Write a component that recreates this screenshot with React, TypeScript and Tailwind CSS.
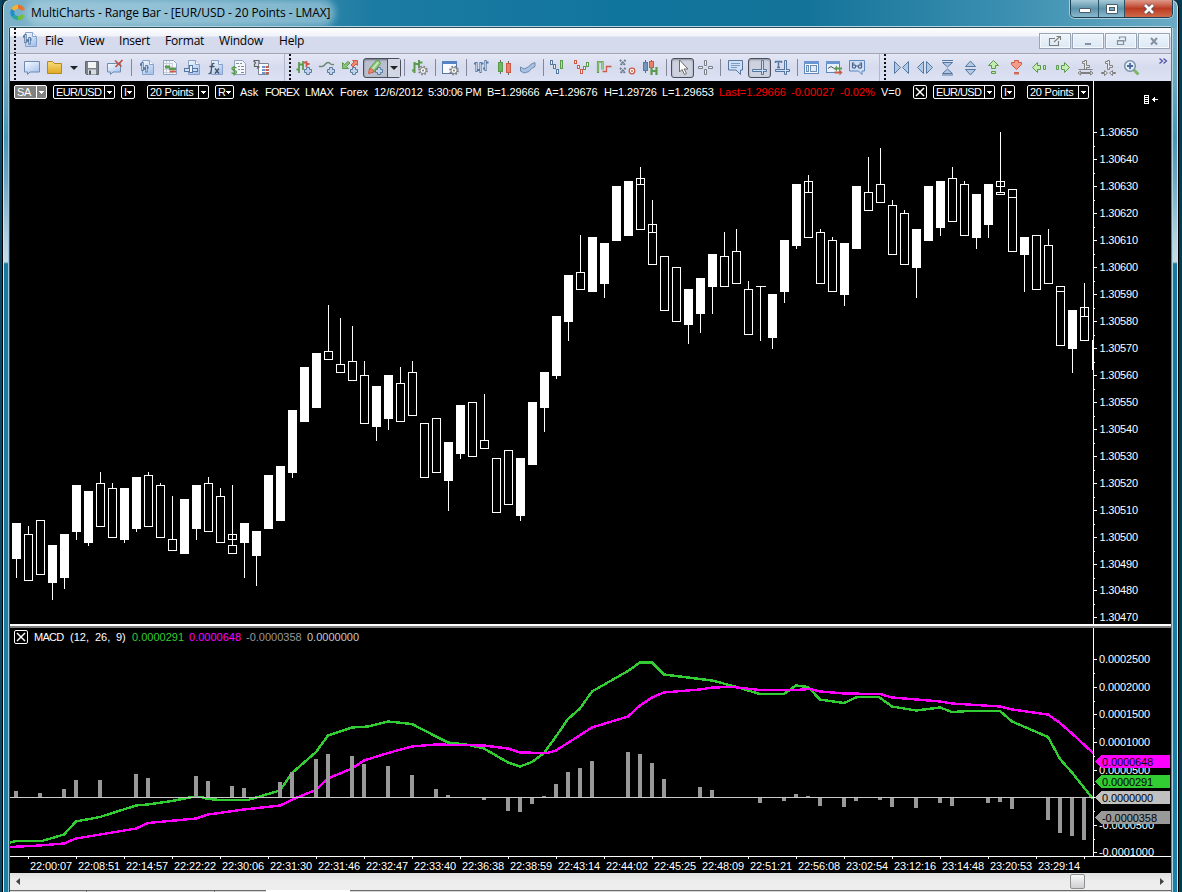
import React from "react";

type Candle = {
  f?: boolean;
  t: number;
  b: number;
  w?: [number, number];
  mid?: number;
  box2?: [number, number];
};

const F = (t: number, b: number, w = 0): Candle => ({ f: true, t, b, w: w ? [b, w] : undefined });
const H = (t: number, b: number, w = 0, mid = 0): Candle => ({ t, b, w: w ? [w, mid || t] : undefined, mid: mid || undefined });

const candles: Candle[] = [
  F(523, 559, 578), H(534, 581, 526), H(520, 575), F(545, 583, 600), F(534, 578, 589),
  F(485, 532, 540), F(491, 543, 546), H(483, 527, 472), H(488, 538, 483), F(488, 540, 543),
  F(477, 529, 532), H(475, 527, 472), H(485, 538, 483), H(539, 551, 496), F(499, 554),
  F(485, 529, 540), H(483, 532, 477), H(496, 543, 488),
  { t: 534, b: 540, w: [485, 545], box2: [545, 554] },
  F(523, 543, 578),
  F(531, 556, 586), F(475, 529), F(466, 521), F(410, 473, 478), F(367, 422),
  F(353, 408), H(351, 360, 305), H(364, 373, 318), H(361, 381, 326), H(375, 424, 361),
  F(386, 427, 441), F(375, 419, 430), H(383, 422, 367), H(372, 416, 361), H(423, 478),
  H(418, 473), F(442, 481, 511), F(405, 454, 459), H(402, 457), H(440, 449, 394),
  H(458, 513), H(450, 505), F(458, 516, 521), F(402, 465), F(372, 408, 432),
  F(316, 376, 379), F(275, 322, 341), H(272, 290, 235), F(237, 292), F(243, 284, 298),
  F(186, 241), F(181, 236), H(178, 230, 167, 184), H(224, 265, 200, 232), H(256, 311),
  H(267, 322), F(289, 325, 344), F(278, 314, 333), F(254, 287, 314), H(256, 287, 232),
  H(251, 284, 229), H(289, 335, 281), { t: 286, b: 287, w: [286, 341] }, F(294, 338, 349), F(240, 292, 303),
  F(184, 246, 249), H(181, 238, 175, 192), H(232, 284, 229), H(240, 292, 237), F(243, 295, 306),
  F(186, 249), H(192, 211, 157), H(184, 203, 148), H(205, 255, 200), H(213, 265, 210),
  F(229, 268, 298), F(186, 241), F(181, 228, 236), H(178, 222, 167), H(184, 236, 181),
  F(194, 238, 249), F(184, 225, 238),
  { t: 181, b: 187, w: [132, 192], box2: [192, 195] },
  { t: 189, b: 252, mid: 197 },
  F(237, 255, 292),
  H(235, 290), H(245, 284, 229), { t: 286, b: 346, mid: 291 }, F(310, 349, 373), H(307, 341, 283, 316),
];

const macd =
  "10,842.5 16,841 42,841 64,834.5 76,821.5 100,817 136,805.5 148,804.5 172,801 192,797 201,797 208,799 221,800 248,800 256,797.5 280,790.5 292,773 316,752 328,735.5 352,727.5 368,726.5 388,721.5 412,724 436,736.5 448,742.5 466,744.5 484,748.5 508,762.5 520,766.5 532,762 544,753 556,736.5 568,719 580,708.5 592,691.5 628,671 640,662.5 652,662.5 664,674.5 700,679 712,680.5 733,686 760,694 784,694 796,685.5 808,687 820,699.5 844,703 857,697 879,697 892,706.5 916,710.5 940,707.5 952,712 970,711 1000,711 1012,721.5 1048,737 1060,759 1072,772.5 1093,799";
const signal =
  "10,847 40,845.5 64,843.5 76,838.5 136,828.5 148,823 196,818.5 208,814.5 244,809.5 280,805.5 296,798 316,790 328,778.5 352,768.5 364,760.5 388,753 412,746.5 436,744.5 484,745.5 508,748.5 520,752.5 547,753 556,750.5 592,727.5 628,716.5 640,705.5 652,697.5 664,692.5 700,689.5 712,687.5 733,687 760,690 796,690 810,689 820,691.5 844,693.5 880,694 892,697.5 940,701.5 952,703.5 1000,706.5 1012,709.5 1048,714.5 1060,723 1072,733.5 1093,753";

const hist: [number, number][] = [
  [0, 791], [2, 793], [4, 789], [5, 780], [7, 780], [10, 774], [11, 778], [15, 776], [16, 781], [18, 786],
  [19, 788], [22, 782], [23, 772], [25, 759], [26, 754], [28, 756], [29, 764], [31, 766], [33, 775], [35, 789],
  [36, 795], [39, 800], [41, 811], [42, 812], [43, 804], [44, 796], [45, 784], [46, 772], [47, 768], [48, 761],
  [51, 752], [52, 754], [53, 763], [54, 779], [57, 787], [58, 790], [62, 803], [64, 801], [65, 794], [66, 796],
  [67, 806], [69, 807], [70, 801], [72, 800], [73, 807], [75, 808], [77, 803], [78, 806], [81, 803], [82, 802],
  [83, 809], [86, 820], [87, 833], [88, 836], [89, 840],
];

const times = [
  "22:00:07", "22:08:51", "22:14:57", "22:22:22", "22:30:06", "22:31:30", "22:31:46", "22:32:47",
  "22:33:40", "22:36:38", "22:38:59", "22:43:14", "22:44:02", "22:45:25", "22:48:09", "22:51:21",
  "22:56:08", "23:02:54", "23:12:16", "23:14:48", "23:20:53", "23:29:14",
];

const macdLevels: [number, string][] = [
  [659, "0.0002500"], [687, "0.0002000"], [714, "0.0001500"], [742, "0.0001000"],
  [770, "0.0000500"], [797, ""], [825, "-0.0000500"], [852, "-0.0001000"],
];

const tags: [number, string, string][] = [
  [755, "#ff00ff", "0.0000648"],
  [775, "#32cd32", "0.0000291"],
  [791, "#c0c0c0", "0.0000000"],
  [811, "#999999", "-0.0000358"],
];

function PriceChart() {
  return (
    <svg className="block shrink-0 bg-black" width="1161" height="519" viewBox="10 105 1161 519" shapeRendering="crispEdges">
      {candles.map((c, i) => {
        const x = 12 + 12 * i;
        return (
          <g key={i}>
            {c.f && <rect x={x} y={c.t} width="9" height={c.b - c.t} fill="#fff" />}
            {!c.f && c.b - c.t > 1 && (
              <rect x={x + 0.5} y={c.t + 0.5} width="8" height={c.b - c.t - 1} fill="none" stroke="#fff" />
            )}
            {!c.f && c.b - c.t === 1 && <rect x={x} y={c.t} width="10" height="1" fill="#fff" />}
            {c.box2 && (
              <rect x={x + 0.5} y={c.box2[0] + 0.5} width="8" height={c.box2[1] - c.box2[0] - 1} fill="none" stroke="#fff" />
            )}
            {c.mid && <rect x={x} y={c.mid} width="9" height="1" fill="#fff" />}
            {c.w && <rect x={x + 4} y={c.w[0]} width="1" height={c.w[1] - c.w[0]} fill="#fff" />}
          </g>
        );
      })}
      <rect x="1092" y="340" width="1" height="30" fill="#fff" />
      <rect x="1093" y="105" width="1" height="519" fill="#fff" />
      {Array.from({ length: 19 }, (_, i) => {
        const y = 132 + i * 27 - (i > 16 ? 1 : 0);
        return (
          <g key={i}>
            <rect x="1094" y={y} width="3" height="1" fill="#fff" />
            {i < 18 && <rect x="1094" y={y + 14} width="1" height="1" fill="#fff" />}
            <text x="1099.5" y={y + 4} fill="#fff" className="font-['Liberation_Sans',Arial,sans-serif] text-[11px]" textLength="38.5">
              {(1.3065 - i * 0.0001).toFixed(5)}
            </text>
          </g>
        );
      })}
    </svg>
  );
}

function MacdChart() {
  return (
    <svg className="block shrink-0 bg-black" width="1161" height="225" viewBox="10 648 1161 225" shapeRendering="crispEdges">
      <polyline points={macd} fill="none" stroke="#32cd32" strokeWidth="2.4" strokeLinejoin="round" />
      <polyline points={signal} fill="none" stroke="#ff00ff" strokeWidth="2.4" strokeLinejoin="round" />
      {hist.map(([i, y]) => (
        <rect key={i} x={14 + 12 * i} y={Math.min(y, 797)} width="4" height={Math.abs(y - 797)} fill="#999" />
      ))}
      <rect x="10" y="797" width="1083" height="1" fill="#c8c8c8" />
      <rect x="1093" y="648" width="1" height="209" fill="#fff" />
      <rect x="10" y="856" width="1161" height="1" fill="#fff" />
      {macdLevels.map(([y, label], i) => (
        <g key={y}>
          <rect x="1094" y={y} width="3" height="1" fill="#fff" />
          {i < 7 && <rect x="1094" y={y + 14} width="1" height="1" fill="#fff" />}
          <text x="1099" y={y + 4} fill="#fff" className="font-['Liberation_Sans',Arial,sans-serif] text-[11px]" textLength={label[0] === "-" ? 55 : 51}>
            {label}
          </text>
        </g>
      ))}
      <rect x="1094" y="857" width="77" height="3" fill="#000" />
      {tags.map(([y, color, label]) => (
        <g key={y}>
          <path d={`M1095 ${y + 6.5} L1101 ${y} H1170 V${y + 13} H1101 Z`} fill={color} />
          <text x="1102" y={y + 11} fill="#000" className="font-['Liberation_Sans',Arial,sans-serif] text-[11px]" textLength={label[0] === "-" ? 55 : 51}>
            {label}
          </text>
        </g>
      ))}
      {Array.from({ length: 23 }, (_, i) => (
        <rect key={i} x={28 + 48 * i} y="857" width="1" height="2" fill="#fff" />
      ))}
      {times.map((t, i) => (
        <text key={t} x={30 + 48 * i} y="870" fill="#fff" className="font-['Liberation_Sans',Arial,sans-serif] text-[11px]" textLength="42">
          {t}
        </text>
      ))}
    </svg>
  );
}

/* ---------- toolbar drawings, all on a 19x19 grid ---------- */

const BLUE = "#56779f";
const PALE = "#cfe0f6";
const GREEN = "#5b9a4c";
const RED = "#cc5a45";

const Page = () => (
  <g>
    <path d="M5.5 2.5h7l4 4v10h-11z" fill="url(#page)" stroke="#86a2cc" />
    <path d="M12.5 2.5v4h4" fill="#fff" stroke="#86a2cc" />
  </g>
);

const Plus = () => (
  <path d="M11.500 9.500h3v2h2v3h-2v2h-3v-2h-2v-3h2z" fill="#c0d3ec" stroke="#5d7a9c" />
);

const Gear = () => (
  <g>
    <circle cx="13" cy="12.500" r="4" fill="none" stroke="#808080" strokeWidth="1.800" strokeDasharray="1.600 1.540" />
    <circle cx="13" cy="12.500" r="3" fill="#f8f8f8" stroke="#858585" />
    <circle cx="13" cy="12.500" r="1" fill="#777" />
  </g>
);

const icons: Record<string, React.ReactNode> = {
  newChart: <path d="M1.500 3.500h15v10.500h-9.500l-2.500 2.500v-2.500h-3z" fill="url(#page)" stroke="#6c8cb2" />,
  folder: <path d="M1.500 15.500v-12h5l2 2h7v10z" fill="url(#gold)" stroke="#b28a1e" />,
  save: (
    <g>
      <path d="M2.500 3.500h13v13h-12l-1-1z" fill="#7b828a" stroke="#60676f" />
      <rect x="5" y="4" width="8" height="6" fill="#f2f4f6" />
      <rect x="5" y="11.500" width="8" height="5" fill="#d8dbe0" />
      <rect x="6" y="12.500" width="2" height="4" fill="#4f565e" />
    </g>
  ),
  closeChart: (
    <g>
      <path d="M1.500 5.500h13v8.500h-7.500l-2.500 2.500v-2.500h-3z" fill="url(#page)" stroke="#6c8cb2" />
      <path d="M9 2.500l6.500 6M16.500 2L9.500 9" stroke="#c0503c" strokeWidth="1.700" fill="none" />
    </g>
  ),
  docBar: (
    <g>
      <Page />
      <path d="M5.500 4v9M9.500 7v7.500M3 6.500h2.500M5.500 10.500h4M9.500 9.500h2" stroke={BLUE} strokeWidth="2.400" fill="none" />
      <path d="M5.500 5v7M9.500 8v5.500" stroke="#d5e4f8" strokeWidth=".8" fill="none" />
    </g>
  ),
  docGrid: (
    <g>
      <path d="M3.500 2.500h10l3 3v11h-13z" fill="#f6f8fc" stroke="#8ea2c2" />
      <path d="M4 5.500h9M4 8.500h9M4 11.500h9M4 14.500h9M6.500 3v13M9.500 3v13M12.500 5v11" stroke="#c3cede" fill="none" />
      <rect x="5" y="7.500" width="5" height="3" fill={GREEN} />
      <rect x="9" y="9.500" width="7" height="2.500" fill={GREEN} />
      <rect x="10" y="12.500" width="6" height="2" fill={RED} />
    </g>
  ),
  docPad: (
    <g>
      <Page />
      <rect x="1.500" y="10.500" width="13" height="3" fill={PALE} stroke={BLUE} />
      <rect x="6.500" y="7.500" width="3" height="7" fill="#e9f1fc" stroke={BLUE} />
    </g>
  ),
  docFx: (
    <g>
      <Page />
      <path d="M8.500 5.500c-2.500-1-2.500 2-3 5s-.5 6-3 5M3.500 8.500h5M9 10.500l4 5M13 10.500l-4 5" stroke="#46535f" strokeWidth="1.300" fill="none" />
    </g>
  ),
  docDollar: (
    <g>
      <path d="M5.500 2.500h8l3 3v11h-11z" fill="#f4f7fc" stroke="#8ea2c2" />
      <path d="M7 5.500h3M11 5.500h2M9 8.500h2M12 8.500h3M9 11.500h2M12 11.500h3M12 14.500h3" stroke="#848b96" />
      <path d="M7.500 10c-2-1.500-4.500-1-4.500.8s4.500 1.400 4.500 3.200-3 2.300-5 .8M5.200 8v9.500" stroke={GREEN} strokeWidth="1.400" fill="none" />
    </g>
  ),
  docTable: (
    <g>
      <path d="M6.500 5.500h10v11h-10z" fill="#f4f7fc" stroke="#7c8794" />
      <rect x="10" y="8" width="3" height="8" fill="#6f93c4" />
      <rect x="13.500" y="8" width="3" height="8" fill={RED} />
      <path d="M7 10.500h10M7 13.500h10" stroke="#fff" />
      <path d="M2 2.500h5v3M4 5.500l-2.500-3M7 8.500H2.500v-3M5 10.500l2.500-2" stroke="#606060" strokeWidth="1.200" fill="none" />
    </g>
  ),
  barsPlus: (
    <g>
      <path d="M4 4v11M8 3v9M1.500 11.500H4M4 6.500h4" stroke={GREEN} strokeWidth="1.800" fill="none" />
      <path d="M11.500 3v6M9 4.500h2.500M11.500 6h3" stroke={RED} strokeWidth="1.800" fill="none" />
      <Plus />
    </g>
  ),
  curvePlus: (
    <g>
      <path d="M1 8.500h3c3 0 3-4 6-4s1.500 3 6 2" stroke="#6b8870" strokeWidth="1.400" fill="none" />
      <Plus />
    </g>
  ),
  arrowsPlus: (
    <g>
      <path d="M1.500 4.500v6h6l-2-2 3.500-3.500-2-1.500-3.500 3z" fill="#8cc377" stroke={GREEN} />
      <path d="M11.500 2.500h5v5l-1.500-1.500-3 3-2-2 3-3z" fill="#ee8a72" stroke={RED} />
      <Plus />
    </g>
  ),
  pencilPlus: (
    <g>
      <path d="M3.500 10.500L10.500 2.500q3.500-.5 4 3L8 14z" fill="#92c87e" stroke={GREEN} />
      <path d="M6 11.500l6.500-7.500" stroke="#cdebc0" strokeWidth="1.500" />
      <path d="M3.500 10.500q3.500 0 4.500 3.500l-5.500 1.500z" fill="#ee8a72" stroke={RED} />
      <Plus />
    </g>
  ),
  barsGear: (
    <g>
      <path d="M4.500 4v11M2 12.500h2.500M4.500 6H9M9 2v8M9 4.500h3.500" stroke={GREEN} strokeWidth="2" fill="none" />
      <Gear />
    </g>
  ),
  windowGear: (
    <g>
      <rect x="1.500" y="3.500" width="14" height="12" fill="#f7f9fd" stroke={BLUE} />
      <rect x="1" y="3" width="15" height="3" fill="#5483c4" />
      <Gear />
    </g>
  ),
  ohlc: (
    <g>
      <path d="M4.500 4v10M2 5.500h2.500M4.500 12H8M8.500 4v11M8.500 5.500h3M13.500 2v11M11 10.500h2.500M13.500 4.500h3" stroke={BLUE} strokeWidth="2.200" fill="none" />
      <path d="M4.500 5v8M8.500 5v9M13.500 3v9" stroke="#d5e2f4" strokeWidth=".8" />
    </g>
  ),
  candles: (
    <g>
      <path d="M5.500 2v14M13.500 3v14" stroke="#666" />
      <rect x="3.500" y="4.500" width="4" height="9" fill="#6fb85e" stroke={GREEN} />
      <rect x="11.500" y="5.500" width="4" height="9" fill="#ea7f6a" stroke={RED} />
    </g>
  ),
  area: <path d="M2.500 9l3.500 2 4.500-2 2-2.500 4.500-2v4l-3.500 2-2.500 3-5 1.500-3.500-2z" fill="#a9c2e2" stroke="#6c8cb2" />,
  kagiUp: (
    <g fill="#eef3fb">
      <rect x="1.500" y="2.500" width="2" height="4" stroke={BLUE} />
      <rect x="4.500" y="6.500" width="2" height="4" stroke={BLUE} />
      <rect x="7.500" y="11.500" width="2" height="4" stroke={BLUE} />
      <rect x="11.500" y="2.500" width="2" height="8" fill="#b5dea6" stroke={GREEN} />
    </g>
  ),
  kagiDown: (
    <g fill="#eef3fb">
      <rect x="2.500" y="2.500" width="2" height="3" stroke={RED} />
      <rect x="5.500" y="7.500" width="2" height="3" stroke={RED} />
      <rect x="8.500" y="11.500" width="2" height="4" stroke={RED} />
      <rect x="11.500" y="8.500" width="2" height="3" stroke={GREEN} />
      <rect x="14.500" y="4.500" width="2" height="4" stroke={GREEN} />
    </g>
  ),
  stepLine: (
    <g fill="none">
      <path d="M3 15V4h4.500v7.500" stroke={GREEN} strokeWidth="2.200" />
      <path d="M3 14V4h4.500v7" stroke="#b5dea6" strokeWidth=".7" />
      <path d="M7.500 13.500h4V8.500h5" stroke={RED} strokeWidth="1.300" />
    </g>
  ),
  pointFig: (
    <g fill="none">
      <path d="M2 2l5.500 5.500M7.500 2L2 7.500M2 10l5.500 5.500M7.500 10L2 15.500" stroke="#64778b" strokeWidth="2" strokeDasharray="1.700 .9" />
      <circle cx="14" cy="13" r="2.800" fill="#fff" stroke={RED} strokeWidth="1.300" />
      <circle cx="14" cy="13" r=".9" fill={RED} />
    </g>
  ),
  candleH: (
    <g>
      <path d="M4.500 2v13M10.500 2v12" stroke="#666" />
      <rect x="2.500" y="4.500" width="4" height="8" fill="#7796bd" stroke={BLUE} />
      <rect x="8.500" y="3.500" width="4" height="6" fill="#ea7f6a" stroke={RED} />
      <path d="M10.500 9v8M15.500 9v8M10.500 13h5" stroke={GREEN} strokeWidth="2.200" />
    </g>
  ),
  pointer: <path d="M6.500 2v12l2.500-2.500 2.500 5 2-1-2.500-4.500h4z" fill="#fff" stroke="#6a6a6a" />,
  cross: (
    <g fill="#eef1f8" stroke="#7a7f88">
      <path d="M8.500 2.500h2v5h-2zM8.500 11.500h2v5h-2zM2.500 8.500h4v2h-4zM12.500 8.500h4v2h-4z" />
    </g>
  ),
  note: (
    <g>
      <path d="M2.500 2.500h14v9.500h-2v4.500l-4.500-4.500h-7.500z" fill={PALE} stroke={BLUE} />
      <path d="M5 5.500h9M5 7.500h9M5 9.500h6" stroke="#7d9cc4" />
    </g>
  ),
  priceLine: (
    <g fill={PALE} stroke={BLUE}>
      <path d="M2.500 11.500h14v2h-14z" />
      <path d="M11.500 2.500h2v14h-2z" />
      <path d="M3 12.500h13" stroke={PALE} />
    </g>
  ),
  textLine: (
    <g>
      <path d="M2 3.500h7M5.500 3v6M4 9.500h3M2.500 3v2M8.500 3v2" stroke={BLUE} strokeWidth="1.500" />
      <g fill={PALE} stroke={BLUE}>
        <path d="M2.500 11.500h14v2h-14z" />
        <path d="M11.500 2.500h2v14h-2z" />
        <path d="M3 12.500h13" stroke={PALE} />
      </g>
    </g>
  ),
  panel: (
    <g>
      <rect x="2.500" y="3.500" width="14" height="12" fill="#f7f9fd" stroke="#5f86bd" />
      <rect x="2" y="3" width="15" height="3" fill="#6c96d0" />
      <rect x="4.500" y="7.500" width="2" height="6" fill="#dfe9f8" stroke="#6c8cb2" />
      <rect x="8.500" y="7.500" width="6" height="6" fill="#dfe9f8" stroke="#6c8cb2" />
    </g>
  ),
  chartSwap: (
    <g>
      <rect x="1.500" y="3.500" width="13" height="11" fill="#e8f0fb" stroke="#5f86bd" />
      <rect x="1" y="3" width="14" height="3" fill="#6c96d0" />
      <path d="M3 10.500l3-2 4 2.500" stroke="#555" fill="none" />
      <path d="M9 10.500l3-3v2h5v2h-5v2z" fill={GREEN} />
      <path d="M17.500 14.500l-3-3v2h-5v2h5v2z" fill={RED} />
    </g>
  ),
  find: (
    <g>
      <path d="M1.500 2.500h15v10.500h-2.500v3.500l-3.500-3.500h-9z" fill={PALE} stroke="#5f86bd" />
      <g fill="none" stroke="#4d6485" strokeWidth="1.200">
        <circle cx="6" cy="8.500" r="1.700" />
        <circle cx="12" cy="8.500" r="1.700" />
        <path d="M4.500 7.500V5h2M13.500 7.500V5h-2M8 8h2" />
      </g>
    </g>
  ),
  compressH: <path d="M2.500 3.500v12l6-6zM16.500 3.500v12l-6-6z" fill="#b2c9e6" stroke={BLUE} />,
  expandH: <path d="M8.500 3.500v12l-6-6zM11.500 3.500v12l6-6z" fill="#b2c9e6" stroke={BLUE} />,
  compressV: <path d="M4.500 4.500h10l-5 4.500zM4.500 15.500h10l-5-4.500zM4 2.500h11M4 17h11" fill="#b2c9e6" stroke={BLUE} />,
  expandV: <path d="M4.500 8.500h10l-5-5.500zM4.500 11.500h10l-5 5.500z" fill="#b2c9e6" stroke={BLUE} />,
  up: <path d="M9.500 2.500l5 5h-3v3h-4v-3h-3zM7.500 13.500h4v2h-4z" fill="#c3ecae" stroke={GREEN} />,
  down: <path d="M9.500 11.500l-5-5v-2h3v-2h4v2h3v2zM7.500 14.500h4v1.500h-4z" fill="#f39c88" stroke={RED} />,
  left: <path d="M2.500 9.500l5-5v3h3v4h-3v3zM13.500 7.500h2v4h-2z" fill="#c3ecae" stroke={GREEN} />,
  right: <path d="M16.500 9.500l-5-5v3h-3v4h3v3zM3.500 7.500h2v4h-2z" fill="#c3ecae" stroke={GREEN} />,
  spaceOut: (
    <g fill="#e8e8ea" stroke="#808080">
      <path d="M6.500 3.500h2v-1h2v5h3v2h-3v2h-2v-6h-2z" />
      <path d="M2.500 11.500h14M2 15l2.500-2v1.500h10v-1.500l2.500 2-2.500 2v-1.500h-10v1.500z" />
    </g>
  ),
  spaceIn: (
    <g fill="#e8e8ea" stroke="#808080">
      <path d="M6.500 3.500h2v-1h2v5h3v2h-3v2h-2v-6h-2z" />
      <path d="M2.500 14.500h3v-2l3 2.500-3 2.500v-2h-3zM16.500 14.500h-3v-2l-3 2.500 3 2.500v-2h3z" />
    </g>
  ),
  zoomIn: (
    <g>
      <path d="M11.500 11.500l5 5" stroke="#7cb766" strokeWidth="3" />
      <circle cx="8" cy="8" r="5.300" fill="#e2edfa" stroke="#7c8fa9" strokeWidth="1.500" />
      <path d="M8 5v6M5 8h6" stroke="#4a6c9d" strokeWidth="1.800" />
    </g>
  ),
};

function Icon({ n }: { n: string }) {
  return (
    <div className="flex h-[27px] w-[23px] shrink-0 items-center justify-center">
      <svg className="block" width="19" height="19" viewBox="0 0 19 19">
        {icons[n]}
      </svg>
    </div>
  );
}

const Sep = ({ w = "w-[8px]" }: { w?: string }) => (
  <div className={`flex h-full shrink-0 justify-center ${w}`}>
    <div className="my-[5px] w-px bg-[#82879a]" />
  </div>
);

const Grip = ({ w }: { w: string }) => (
  <div className={`h-full shrink-0 pl-[4px] ${w}`}>
    <div className="h-full w-[2px] bg-[repeating-linear-gradient(to_bottom,#111_0_2px,transparent_2px_4px)]" />
  </div>
);

const Tri = ({ fill = "#222", w = 8 }: { fill?: string; w?: number }) => (
  <svg className="block shrink-0" width={w} height={w / 2} viewBox="0 0 8 4">
    <path d="M0 0h8L4 4z" fill={fill} />
  </svg>
);

const SmallTri = () => (
  <svg className="block shrink-0" width="5" height="3" viewBox="0 0 5 3" shapeRendering="crispEdges">
    <path d="M0 0h5v1H0zM1 1h3v1H1zM2 2h1v1H2z" fill="#fff" />
  </svg>
);

function Toolbar() {
  return (
    <div className="flex h-[27px] shrink-0 items-center overflow-hidden bg-gradient-to-b from-[#e4e7f5] via-[#d6dbee] to-[#dde3f5]">
      <Grip w="w-[11px]" />
      <Icon n="newChart" />
      <Icon n="folder" />
      <div className="flex w-[14px] shrink-0 justify-center"><Tri /></div>
      <Icon n="save" />
      <Icon n="closeChart" />
      <Sep />
      {["docBar", "docGrid", "docPad", "docFx", "docDollar", "docTable"].map((n) => <Icon key={n} n={n} />)}
      <div className="h-full w-[12px] shrink-0 border-r border-[#b4b8c8]" />
      <Grip w="w-[8px]" />
      {["barsPlus", "curvePlus", "arrowsPlus"].map((n) => <Icon key={n} n={n} />)}
      <div className="ml-px flex h-[20px] w-[38px] shrink-0 items-center rounded-[3px] border border-[#4b4f5c] bg-[#b9bfce] shadow-[inset_0_1px_2px_#6b7080]">
        <Icon n="pencilPlus" />
        <div className="flex h-full flex-1 items-center justify-center border-l border-[#4b4f5c] bg-[#d3d7e3]"><Tri /></div>
      </div>
      <Sep w="w-[7px]" />
      <Icon n="barsGear" />
      <Sep />
      <Icon n="windowGear" />
      <Sep />
      {["ohlc", "candles", "area"].map((n) => <Icon key={n} n={n} />)}
      <Sep />
      {["kagiUp", "kagiDown", "stepLine", "pointFig", "candleH"].map((n) => <Icon key={n} n={n} />)}
      <Sep />
      <div className="ml-px flex h-[20px] w-[23px] shrink-0 items-center justify-center rounded-[3px] border border-[#4b4f5c] bg-[#ced2de] shadow-[inset_0_1px_2px_#8b90a0]">
        <Icon n="pointer" />
      </div>
      <Icon n="cross" />
      <Sep w="w-[7px]" />
      <Icon n="note" />
      <div className="ml-px flex h-[20px] w-[23px] shrink-0 items-center justify-center rounded-[3px] border border-[#4b4f5c] bg-[#ced2de] shadow-[inset_0_1px_2px_#8b90a0]">
        <Icon n="priceLine" />
      </div>
      <Icon n="textLine" />
      <Sep w="w-[6px]" />
      {["panel", "chartSwap", "find"].map((n) => <Icon key={n} n={n} />)}
      <div className="h-full w-[11px] shrink-0 border-r border-[#b4b8c8]" />
      <Grip w="w-[10px]" />
      {["compressH", "expandH", "compressV", "expandV", "up", "down", "left", "right", "spaceOut", "spaceIn", "zoomIn"].map((n) => (
        <Icon key={n} n={n} />
      ))}
      <svg className="mb-[13px] ml-[16px] block shrink-0" width="9" height="6" viewBox="0 0 9 6">
        <path d="M.5 .5L3.500 3 .5 5.500M4.500 .5L7.500 3 4.500 5.500" fill="none" stroke="#4c4fa8" strokeWidth="1.200" />
      </svg>
    </div>
  );
}

const Combo = ({ text, w, gray = false, tight = false }: { text: string; w: string; gray?: boolean; tight?: boolean }) => (
  <div className={`flex h-[14px] shrink-0 items-center rounded-[2px] border border-white leading-none ${w} ${gray ? "bg-[#808080]" : "bg-black"}`}>
    <span className={`flex-1 whitespace-nowrap pl-[2px] ${tight ? "tracking-[-0.6px]" : "tracking-[-0.25px]"}`}>{text}</span>
    <span className="flex h-full w-[10px] shrink-0 items-center justify-center border-l border-white"><SmallTri /></span>
  </div>
);

const MiniCombo = ({ text, w }: { text: string; w: string }) => (
  <div className={`flex h-[14px] shrink-0 items-center justify-between rounded-[2px] border border-white px-[2px] leading-none ${w}`}>
    <span>{text}</span>
    <SmallTri />
  </div>
);

const CloseBox = () => (
  <div className="flex h-[14px] w-[14px] shrink-0 items-center justify-center rounded-[2px] border border-white">
    <svg className="block" width="10" height="10" viewBox="0 0 10 10">
      <path d="M1 1l8 8M9 1L1 9" stroke="#fff" strokeWidth="1.500" />
    </svg>
  </div>
);

function StatusLine() {
  return (
    <div className="flex h-[24px] shrink-0 bg-black text-[11px] text-white">
      <div className="flex h-full w-[1083px] shrink-0 items-start whitespace-nowrap pl-[4px] pt-[4px] leading-[14px]">
        <Combo text="SA" w="w-[33px]" gray />
        <div className="w-[6px] shrink-0" />
        <Combo text="EUR/USD" w="w-[62px]" tight />
        <div className="w-[6px] shrink-0" />
        <MiniCombo text="I" w="w-[14px]" />
        <div className="w-[12px] shrink-0" />
        <Combo text="20 Points" w="w-[62px]" />
        <div className="w-[6px] shrink-0" />
        <MiniCombo text="R" w="w-[19px]" />
        <div className="w-[6px] shrink-0" />
        <span className="w-[25px] shrink-0">Ask</span>
        <span className="w-[40px] shrink-0 tracking-[-0.75px]">FOREX</span>
        <span className="w-[35px] shrink-0 tracking-[-0.4px]">LMAX</span>
        <span className="w-[34px] shrink-0">Forex</span>
        <span className="w-[54px] shrink-0">12/6/2012</span>
        <span className="w-[59px] shrink-0 tracking-[-0.3px]">5:30:06 PM</span>
        <span className="w-[58px] shrink-0 tracking-[-0.1px]">B=1.29666</span>
        <span className="w-[59px] shrink-0 tracking-[-0.1px]">A=1.29676</span>
        <span className="w-[58px] shrink-0 tracking-[-0.15px]">H=1.29726</span>
        <span className="w-[57px] shrink-0 tracking-[-0.05px]">L=1.29653</span>
        <span className="w-[72px] shrink-0 text-[#ff0000]">Last=1.29666</span>
        <span className="w-[49px] shrink-0 text-[#ff0000]">-0.00027</span>
        <span className="w-[41px] shrink-0 text-[#ff0000]">-0.02%</span>
        <span className="w-[32px] shrink-0">V=0</span>
        <CloseBox />
        <div className="w-[6px] shrink-0" />
        <Combo text="EUR/USD" w="w-[62px]" tight />
        <div className="w-[6px] shrink-0" />
        <MiniCombo text="I" w="w-[14px]" />
        <div className="w-[12px] shrink-0" />
        <Combo text="20 Points" w="w-[62px]" />
      </div>
      <div className="h-full flex-1 border-l border-white pl-[50px] pt-[14px]">
        <svg className="block" width="16" height="9" viewBox="0 0 16 9" shapeRendering="crispEdges">
          <path d="M.5 .5h4v8h-4zM0 2.500h5M0 4.500h5M0 6.500h5" fill="none" stroke="#fff" />
          <path d="M8 4h6v1H8zM9 3h2v3H9zM10 2h1v5h-1z" fill="#fff" />
        </svg>
      </div>
    </div>
  );
}

const MdiButton = ({ children }: { children: React.ReactNode }) => (
  <div className="flex h-[16px] w-[32px] items-center justify-center border border-[#98a5b5] bg-gradient-to-b from-[#eef5fc] to-[#dbe8f5] shadow-[inset_0_0_0_1px_#f5f9fd]">
    <svg className="block" width="14" height="12" viewBox="0 0 14 12">{children}</svg>
  </div>
);

function MenuBar() {
  return (
    <div className="flex h-[26px] shrink-0 border-b border-[#a3a6b2] bg-[linear-gradient(to_bottom,#fff_0,#f0f2f9_8px,#d5daec_9px,#d5daec_100%)]">
      <Grip w="w-[10px]" />
      <svg className="mt-[2px] block shrink-0" width="19" height="19" viewBox="0 0 19 19">{icons.docBar}</svg>
      <div className="ml-[6px] flex shrink-0 font-['Open_Sans','Noto_Sans',sans-serif] text-[12px] leading-[25px] tracking-[-0.2px] text-black">
        <span className="w-[34px]">File</span>
        <span className="w-[40px]">View</span>
        <span className="w-[46px]">Insert</span>
        <span className="w-[54px]">Format</span>
        <span className="w-[60px]">Window</span>
        <span>Help</span>
      </div>
      <div className="ml-auto mr-px mt-[5px] flex gap-px">
        <MdiButton><path d="M7 3.500H1.500v7h9V6M6 7l6-5.500M8.500 1.500h4v3.500" fill="none" stroke="#7c8078" strokeWidth="1.100" /></MdiButton>
        <MdiButton><rect x="4" y="8" width="6" height="2" fill="#8591a1" /></MdiButton>
        <MdiButton>
          <path d="M5.500 4V2h6v4h-2M3.500 5.500h6v4h-6zM3.500 6h6" fill="none" stroke="#8591a1" strokeWidth="1.200" />
        </MdiButton>
        <MdiButton><path d="M4 3l6 6.500M10 3L4 9.500" stroke="#8591a1" strokeWidth="2" /></MdiButton>
      </div>
    </div>
  );
}

function TitleBar() {
  return (
    <div className="flex h-[28px] shrink-0 bg-[#053a52]">
      <div className="w-[2px] bg-[#0a4763]" />
      <div className="flex h-full flex-1 overflow-hidden rounded-t-[7px] border-l border-r border-black bg-[#cfe3ec] px-px">
        <div className="flex flex-1 justify-between rounded-t-[7px] bg-[linear-gradient(to_right,#7cb2c9_0,#5a9fbc_180px,#1c7ba2_370px,#10759d_620px,#147399_800px,#3a8fb0_1000px,#6aaac4_100%)]">
          <div className="flex items-start pl-[6px] pt-[4px]">
            <svg className="block shrink-0" width="16" height="17" viewBox="0 0 16 17">
              <g fill="none" strokeWidth="4">
                <path d="M8 2.800a5.700 5.700 0 0 1 5.300 3.400" stroke="#e8702c" />
                <path d="M3 6a5.700 5.700 0 0 1 5-3.200" stroke="#f5b335" />
                <path d="M3.500 12A5.700 5.700 0 0 1 3 6" stroke="#1d8fd0" />
                <path d="M8 14.200a5.700 5.700 0 0 1-4.500-2.200" stroke="#2aa6a0" />
                <path d="M13.300 11A5.700 5.700 0 0 1 8 14.200" stroke="#6fbf3b" />
              </g>
            </svg>
            <div className="ml-[5px] whitespace-nowrap rounded-full bg-[#b4d6e4]/60 font-['Open_Sans','Noto_Sans',sans-serif] text-[12px] leading-[18px] tracking-[-0.1px] text-black shadow-[0_0_7px_5px_rgba(180,214,228,0.6)]">
              MultiCharts - Range Bar - [EUR/USD - 20 Points - LMAX]
            </div>
          </div>
          <div className="mr-[4px] flex h-[18px] overflow-hidden rounded-b-[5px] border border-t-0 border-[#1d3f50] shadow-[0_0_0_1px_#a8cddc]">
            <div className="flex w-[28px] items-center justify-center border-r border-[#2b5265] bg-gradient-to-b from-[#a8cbd9] via-[#5d93ab] to-[#8ab9cd]">
              <div className="mt-[3px] h-[5px] w-[12px] rounded-[1px] border border-[#4a5a66] bg-white" />
            </div>
            <div className="flex w-[26px] items-center justify-center border-r border-[#2b5265] bg-gradient-to-b from-[#a8cbd9] via-[#5d93ab] to-[#8ab9cd]">
              <div className="flex h-[10px] w-[12px] items-center justify-center rounded-[1px] border border-[#4a5a66] bg-white">
                <div className="h-[4px] w-[6px] border border-[#4a5a66] bg-[#7fa9bd]" />
              </div>
            </div>
            <div className="flex w-[47px] items-center justify-center bg-gradient-to-b from-[#dd9a8a] via-[#bb3a22] to-[#cf6a4b]">
              <svg className="block" width="14" height="12" viewBox="0 0 14 12">
                <path d="M3 2l8 8M11 2l-8 8" stroke="#4b4b55" strokeWidth="4.500" />
                <path d="M3 2l8 8M11 2l-8 8" stroke="#fff" strokeWidth="2.800" />
              </svg>
            </div>
          </div>
        </div>
      </div>
      <div className="w-[3px] bg-[#053a52]" />
    </div>
  );
}

const Glass = () => (
  <div className="w-[4px] bg-[linear-gradient(to_bottom,#78afc7_0,#6aa8c2_50px,#4796b8_110px,#6ba7c4_150px,#b9d3e3_215px,#c6dbe7_234px,#5f95ac_235px,#1679a2_236px,#1a80a8_100%)]" />
);

export default function App() {
  return (
    <div className="flex h-[892px] w-[1182px] flex-col overflow-hidden bg-[#053a52] font-['Liberation_Sans',Arial,sans-serif]">
      <svg width="0" height="0" className="absolute">
        <defs>
          <linearGradient id="page" x1="0" y1="0" x2="0.600" y2="1">
            <stop offset="0" stopColor="#f8fbff" />
            <stop offset="1" stopColor="#a9c4ee" />
          </linearGradient>
          <linearGradient id="gold" x1="0" y1="0" x2="0" y2="1">
            <stop offset="0" stopColor="#f8dd7c" />
            <stop offset="1" stopColor="#dfa921" />
          </linearGradient>
        </defs>
      </svg>
      <TitleBar />
      <div className="flex h-[864px]">
        <div className="flex w-[10px] shrink-0">
          <div className="w-[2px] bg-[#0a4763]" />
          <div className="w-px bg-black" />
          <div className="w-px bg-[#d3e6ee]" />
          <Glass />
          <div className="w-px bg-[#9cc6d8]" />
          <div className="w-px bg-[#1f4a5c]" />
        </div>
        <div className="-mt-[2px] flex h-[866px] w-[1161px] shrink-0 flex-col border-t border-[#b5d5e2]">
          <div className="h-px shrink-0 bg-[#2b4d5b]" />
          <MenuBar />
          <Toolbar />
          <StatusLine />
          <PriceChart />
          <div className="h-[4px] shrink-0 border-b-2 border-t-2 border-b-[#808080] border-t-white" />
          <div className="flex h-[20px] shrink-0 bg-black text-[11px] text-white">
            <div className="flex w-[1083px] shrink-0 items-start whitespace-nowrap pl-[4px] pt-[2px] leading-[14px]">
              <CloseBox />
              <span className="ml-[6px] w-[36px] tracking-[-0.7px]">MACD</span>
              <span className="w-[25px]">(12,</span>
              <span className="w-[21px]">26,</span>
              <span className="w-[16px]">9)</span>
              <span className="w-[57px] text-[#32cd32]">0.0000291</span>
              <span className="w-[57px] text-[#ff00ff]">0.0000648</span>
              <span className="w-[61px] text-[#999]">-0.0000358</span>
              <span className="text-[#c8c8c8]">0.0000000</span>
            </div>
            <div className="flex-1 border-l border-white" />
          </div>
          <MacdChart />
          <div className="flex h-[17px] shrink-0 items-center bg-gradient-to-b from-[#e0e0e0] via-[#ededed] to-[#eeeeee] pl-[6px] pr-[7px]">
            <svg className="block" width="4" height="7" viewBox="0 0 4 7"><path d="M4 0v7L0 3.500z" fill="#444" /></svg>
            <div className="ml-auto mr-[75px] h-[15px] w-[15px] rounded-[2px] border border-[#8f8f8f] bg-gradient-to-b from-[#f8f8f8] to-[#cfcfd2]" />
            <svg className="block" width="4" height="7" viewBox="0 0 4 7"><path d="M0 0v7L4 3.500z" fill="#444" /></svg>
          </div>
          <div className="flex h-[2px] shrink-0 border-t border-[#6b6b6b] bg-[#d6d6d6]">
            <div className="w-[77px] border-r border-[#777]" />
            <div className="w-[128px] border-r border-[#777]" />
            <div className="w-[51px]" />
            <div className="-mt-px h-[2px] w-[84px] bg-white" />
          </div>
        </div>
        <div className="flex w-[11px] shrink-0">
          <div className="w-px bg-[#5f7f8c]" />
          <div className="w-px bg-[#b5d5e2]" />
          <Glass />
          <div className="w-px bg-[#d3e6ee]" />
          <div className="w-px bg-black" />
          <div className="w-[3px] bg-[#053a52]" />
        </div>
      </div>
    </div>
  );
}
